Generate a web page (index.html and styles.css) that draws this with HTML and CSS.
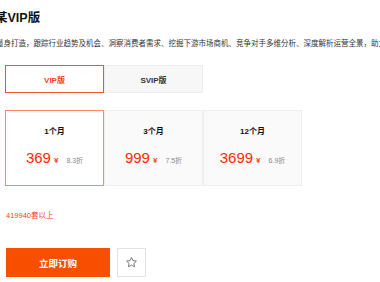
FILE: index.html
```html
<!DOCTYPE html>
<html lang="zh">
<head>
<meta charset="utf-8">
<link rel="stylesheet" href="styles.css">
</head>
<body>
<div class="page">
  <h1 class="title">某VIP版</h1>
  <p class="desc">量身打造，跟踪行业趋势及机会、洞察消费者需求、挖掘下游市场商机、竞争对手多维分析、深度解析运营全景，助力品牌决策</p>
  <div class="tabs">
    <div class="tab tab-active">VIP版</div>
    <div class="tab">SVIP版</div>
  </div>
  <div class="cards">
    <div class="card card-active">
      <div class="month">1个月</div>
      <div class="price"><span class="num">369</span><span class="yen">¥</span><span class="off">8.3折</span></div>
    </div>
    <div class="card">
      <div class="month">3个月</div>
      <div class="price"><span class="num">999</span><span class="yen">¥</span><span class="off">7.5折</span></div>
    </div>
    <div class="card">
      <div class="month">12个月</div>
      <div class="price"><span class="num">3699</span><span class="yen">¥</span><span class="off">6.9折</span></div>
    </div>
  </div>
  <div class="count">419940套以上</div>
  <div class="actions">
    <button class="buy">立即订购</button>
    <button class="fav" aria-label="收藏">
      <svg width="13" height="13" viewBox="0 0 24 24"><path d="M12 2.8l2.75 5.75 6.3.8-4.6 4.35 1.15 6.25L12 16.9l-5.6 3.05 1.15-6.25-4.6-4.35 6.3-.8z" fill="none" stroke="#666" stroke-width="1.6" stroke-linejoin="round"/></svg>
    </button>
  </div>
</div>
</body>
</html>
```

FILE: styles.css
```css
html, body {
  margin: 0;
  padding: 0;
  background: #fff;
  overflow: hidden;
}
body {
  font-family: "Liberation Sans", Arial, "Noto Sans CJK SC", sans-serif;
  color: #222;
}
.page {
  padding: 10px 0 0 5px;
}
.title {
  margin: 0 0 0 -10px;
  font-size: 12.5px;
  line-height: 16px;
  font-weight: bold;
  color: #111;
  white-space: nowrap;
}
.desc {
  margin: 13px 0 0 -9px;
  font-size: 7.5px;
  line-height: 10px;
  color: #333;
  white-space: nowrap;
}
.tabs {
  display: flex;
  margin-top: 16px;
}
.tab {
  box-sizing: border-box;
  width: 99px;
  height: 28px;
  display: flex;
  align-items: center;
  justify-content: center;
  font-size: 8px;
  font-weight: bold;
  color: #333;
  background: #f7f7f7;
  border: 1px solid #ececec;
}
.tab-active {
  color: #f5421a;
  background: #fff;
  border-color: #f5532b;
}
.cards {
  display: flex;
  margin-top: 17px;
}
.card {
  box-sizing: border-box;
  width: 99px;
  height: 76px;
  padding-top: 16px;
  background: #fafafa;
  border: 1px solid #efefef;
  text-align: center;
}
.card-active {
  background: #fff;
  border-color: #fb8a6c;
}
.month {
  font-size: 8px;
  line-height: 10px;
  font-weight: bold;
  color: #111;
}
.price {
  margin-top: 12px;
  display: flex;
  align-items: baseline;
  justify-content: center;
  line-height: 18px;
}
.num {
  font-size: 15px;
  color: #ff2a00;
}
.yen {
  margin-left: 3px;
  font-size: 8px;
  font-weight: bold;
  color: #f5421a;
}
.off {
  margin-left: 8px;
  font-size: 7px;
  color: #888;
}
.count {
  margin-top: 25px;
  margin-left: 1px;
  font-size: 7.5px;
  line-height: 10px;
  color: #f5421a;
}
.actions {
  display: flex;
  gap: 7px;
  margin-top: 27px;
  margin-left: 1px;
}
.buy {
  width: 104px;
  height: 29px;
  border: 0;
  background: #f74e00;
  color: #fff;
  font-family: inherit;
  font-size: 9.5px;
  font-weight: bold;
  padding: 0;
}
.fav {
  box-sizing: border-box;
  width: 29px;
  height: 29px;
  padding: 0;
  background: #fff;
  border: 1px solid #e2e2e2;
  display: flex;
  align-items: center;
  justify-content: center;
}
```
